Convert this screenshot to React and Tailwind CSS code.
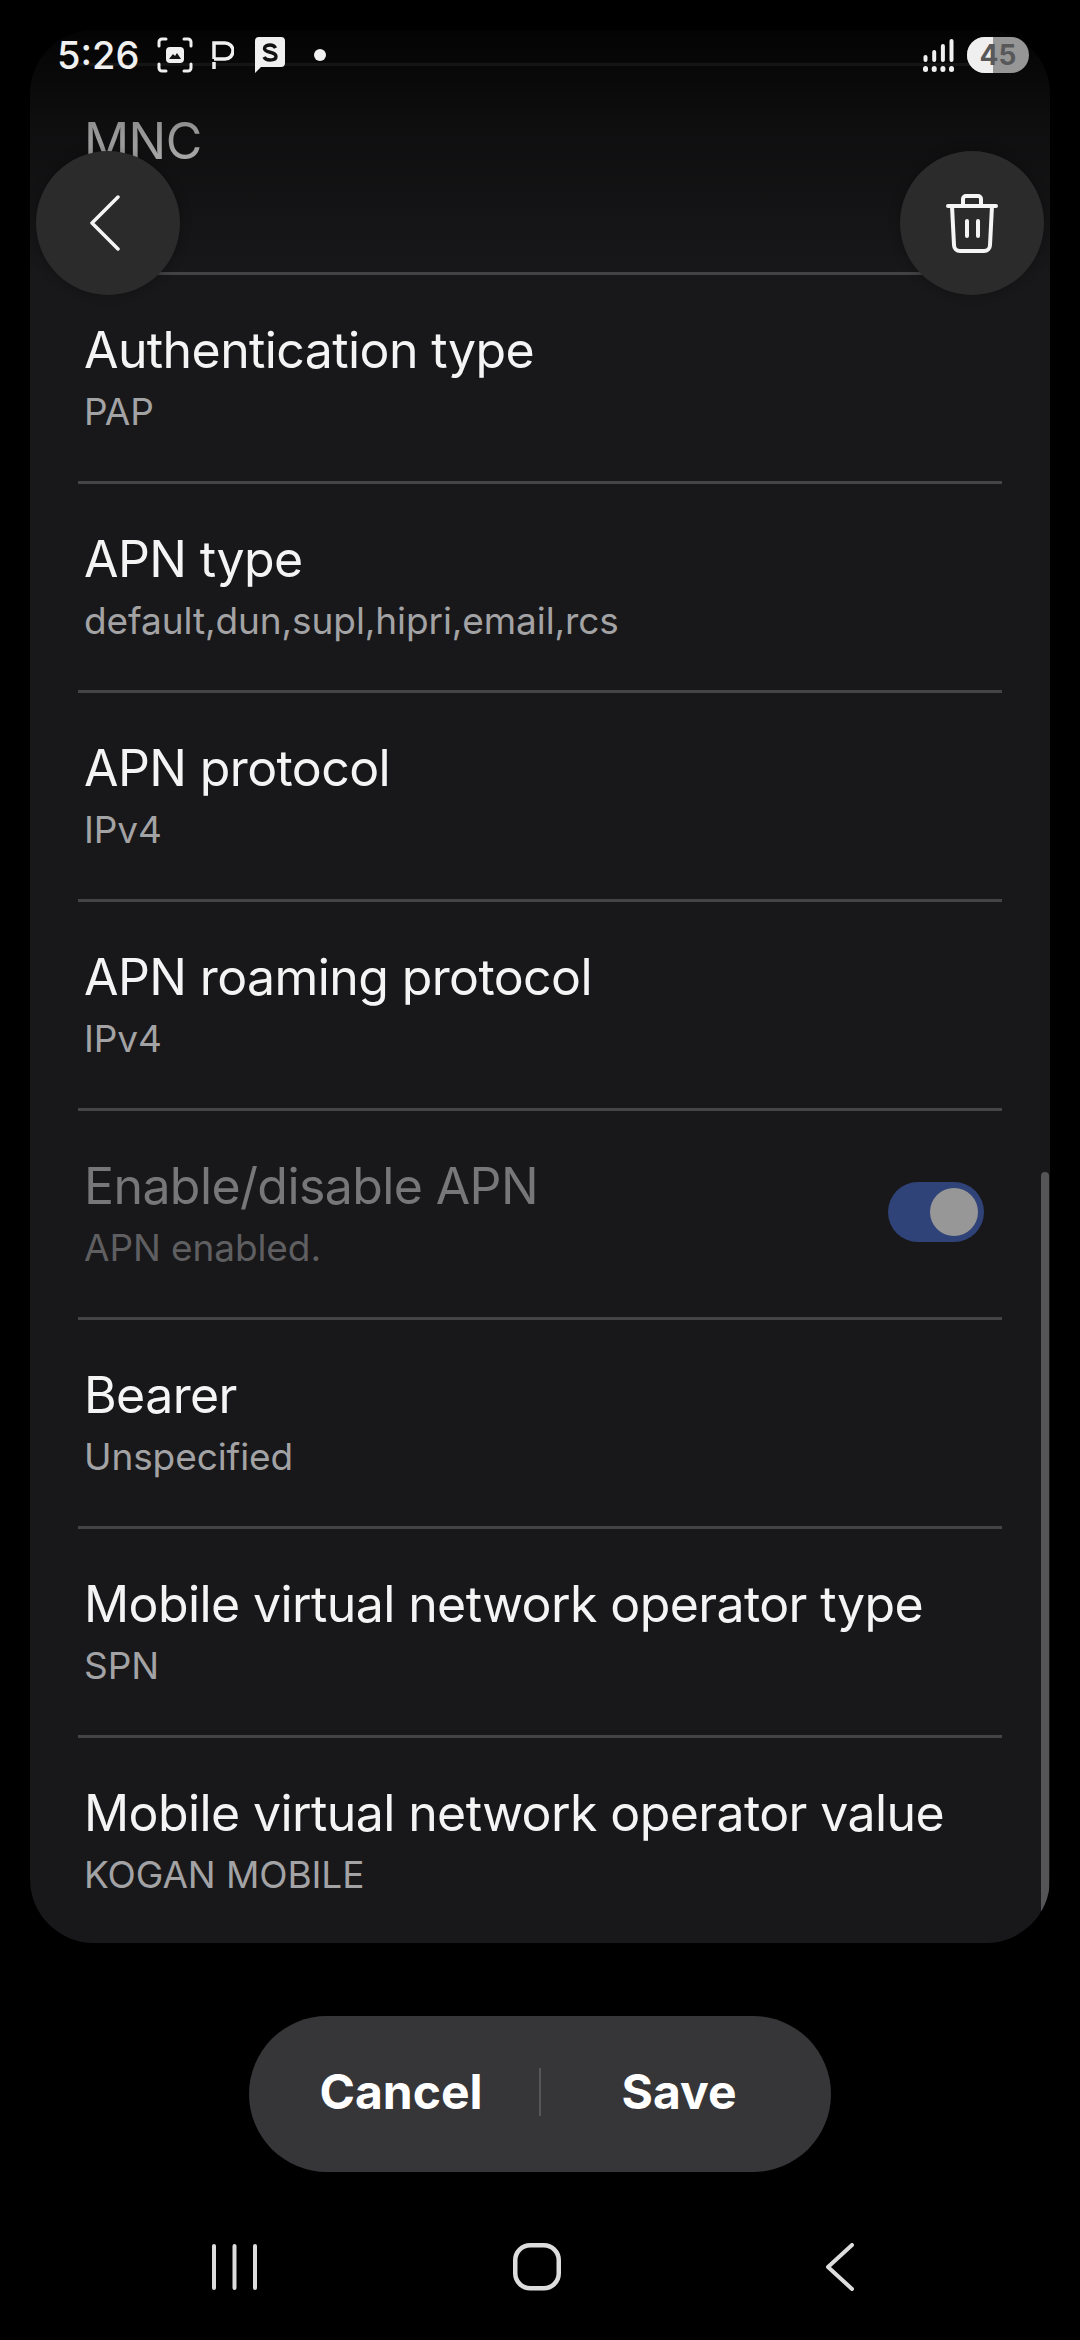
const rows = [
  { title: "Authentication type", value: "PAP" },
  { title: "APN type", value: "default,dun,supl,hipri,email,rcs" },
  { title: "APN protocol", value: "IPv4" },
  { title: "APN roaming protocol", value: "IPv4" },
  { title: "Enable/disable APN", value: "APN enabled.", disabled: true, toggle: true },
  { title: "Bearer", value: "Unspecified" },
  { title: "Mobile virtual network operator type", value: "SPN" },
  { title: "Mobile virtual network operator value", value: "KOGAN MOBILE", last: true },
];

const Row = ({ title, value, disabled, toggle, last }) => (
  <div className={`relative h-[209px] mx-12 px-[6px] pt-[42px] ${last ? "" : "border-b-[3px] border-[#444446]"}`}>
    <div className={`text-[50px] tracking-[-0.6px] leading-[66px] ${disabled ? "text-[#77777a]" : "text-[#f4f4f4]"}`}>{title}</div>
    <div className={`text-[37px] tracking-[-0.1px] leading-[50px] mt-[4px] ${disabled ? "text-[#5f5f61]" : "text-[#a3a3a5]"}`}>{value}</div>
    {toggle && (
      <div className="absolute right-[18px] top-[71px] w-[96px] h-[60px] rounded-full bg-[#2f4379] flex items-center justify-end pr-[6px]">
        <div className="w-[48px] h-[48px] rounded-full bg-[#979797]" />
      </div>
    )}
  </div>
);

const StatusBar = () => (
  <div className="absolute top-0 left-0 right-0 h-[110px] flex items-start justify-between pl-[57px] pr-[51px] pt-[32px] text-[#f0f0f0]">
    <div className="flex items-center h-[46px]">
      <span className="text-[38px] font-medium leading-none w-[100px]">5:26</span>
      <svg width="36" height="36" viewBox="0 0 36 36" fill="none" stroke="#f0f0f0" strokeWidth="3" strokeLinecap="round">
        <path d="M2 9V5a3 3 0 0 1 3-3h4M27 2h4a3 3 0 0 1 3 3v4M2 27v4a3 3 0 0 0 3 3h4M27 34h4a3 3 0 0 0 3-3v-4" />
        <rect x="9" y="10" width="18" height="16" rx="4" fill="#f0f0f0" stroke="none" />
        <path d="M12 22l4-5 2 2 2-3 4 6z" fill="#111" stroke="none" />
      </svg>
      <svg className="ml-[19px]" width="22" height="28" viewBox="0 0 22 28" fill="none" stroke="#f0f0f0" strokeWidth="3.5">
        <path d="M2 18V2h11a8 8 0 0 1 0 16H2M2 21v7" />
      </svg>
      <svg className="ml-[21px]" width="30" height="36" viewBox="0 0 30 36">
        <path d="M4 0h22a4 4 0 0 1 4 4v22a4 4 0 0 1-4 4H6l-6 6V4a4 4 0 0 1 4-4z" fill="#f0f0f0" />
        <path d="M20.5 11c-1-2-3-3-5.500-3s-5.500 1-5.500 3.500c0 5 11.500 2.500 11.500 8 0 2.500-3 3.500-6 3.500s-5-1-6-3" fill="none" stroke="#111" strokeWidth="3.4" />
      </svg>
      <div className="ml-[29px] w-[12px] h-[12px] rounded-full bg-[#f0f0f0]" />
    </div>
    <div className="flex items-center h-[46px]">
      <svg width="31" height="33" viewBox="0 0 31 33" fill="#f0f0f0">
        <rect x="0" y="27" width="5" height="6" rx="2.500" />
        <rect x="8.700" y="27" width="5" height="6" rx="2.500" />
        <rect x="17.400" y="27" width="5" height="6" rx="2.500" />
        <rect x="26" y="27" width="5" height="6" rx="2.500" />
        <rect x="0.500" y="16" width="4" height="7" rx="2" />
        <rect x="9.200" y="11" width="4" height="12" rx="2" />
        <rect x="17.900" y="5" width="4" height="18" rx="2" />
        <rect x="26.500" y="0" width="4" height="23" rx="2" />
      </svg>
      <div className="relative ml-[13px] w-[62px] h-[36px] rounded-full overflow-hidden bg-[#969696]">
        <div className="absolute left-0 top-0 bottom-0 w-[26px] bg-[#efefef]" />
        <div className="absolute inset-0 flex items-center justify-center text-[28px] font-bold leading-none text-[#58585a]">45</div>
      </div>
    </div>
  </div>
);

const RoundButton = ({ children }) => (
  <div className="w-[144px] h-[144px] rounded-full bg-[#2b2b2c] flex items-center justify-center shadow-[0_0_12px_rgba(0,0,0,0.3)]">
    {children}
  </div>
);

export default function App() {
  return (
    <div className="relative w-[1080px] h-[2340px] bg-black overflow-hidden flex flex-col items-center font-['Inter',sans-serif]">
      {/* scrolled list panel */}
      <div className="relative w-[1020px] h-[1913px] mt-[30px] shrink-0 rounded-[64px] bg-[#18181a] overflow-hidden">
        <div className="h-[36px] mx-12 border-b-[3px] border-[#444446]" />
        <div className="relative h-[209px] mx-12 px-[6px] pt-[42px] border-b-[3px] border-[#444446]">
          <div className="text-[50px] tracking-[-0.6px] leading-[66px] text-[#f4f4f4]">MNC</div>
        </div>
        {rows.map((r) => (
          <Row key={r.title} {...r} />
        ))}
        <div className="absolute right-[1px] top-[1142px] w-[8px] h-[754px] rounded-full bg-[#555557]" />
      </div>

      {/* top fade */}
      <div className="absolute top-0 left-0 right-0 h-[280px] bg-gradient-to-b from-black via-black/40 via-45% to-transparent" />

      <StatusBar />

      <div className="absolute top-[151px] left-[36px] right-[36px] flex justify-between">
        <RoundButton>
          <svg className="-ml-[6px]" width="32" height="56" viewBox="0 0 32 56" fill="none" stroke="#f5f5f5" strokeWidth="3.5" strokeLinecap="round" strokeLinejoin="round">
            <path d="M29 2L3 28l26 26" />
          </svg>
        </RoundButton>
        <RoundButton>
          <svg width="52" height="60" viewBox="0 0 52 60" fill="none" stroke="#f5f5f5" strokeWidth="4" strokeLinecap="round" strokeLinejoin="round">
            <path d="M2 13h48M17 13V6a3 3 0 0 1 3-3h12a3 3 0 0 1 3 3v7M6 13l2 39a6 6 0 0 0 6 6h24a6 6 0 0 0 6-6l2-39M21 28v15M32 28v15" />
          </svg>
        </RoundButton>
      </div>

      {/* cancel / save pill */}
      <div className="mt-[73px] w-[582px] h-[156px] shrink-0 rounded-full bg-[#363638] flex items-center text-white text-[48px] font-bold">
        <div className="flex-1 flex justify-center pl-[14px] pb-[4px]">Cancel</div>
        <div className="w-[2px] h-[48px] bg-[#565658] -mt-[4px]" />
        <div className="flex-1 flex justify-center pr-[14px] pb-[4px]">Save</div>
      </div>

      {/* navigation bar */}
      <div className="mt-[71px] w-full flex items-start pl-[210px]">
        <svg width="48" height="48" viewBox="0 0 48 48" stroke="#dddddd" strokeWidth="4" strokeLinecap="round">
          <path d="M4 3v42M24.500 3v42M45 3v42" />
        </svg>
        <svg className="ml-[255px]" width="48" height="48" viewBox="0 0 48 48" fill="none" stroke="#dddddd" strokeWidth="4.500">
          <rect x="2.250" y="2.250" width="43.500" height="43" rx="15" />
        </svg>
        <svg className="ml-[263px]" width="32" height="48" viewBox="0 0 32 48" fill="none" stroke="#dddddd" strokeWidth="4" strokeLinecap="round" strokeLinejoin="round">
          <path d="M28 2L4 24l24 22" />
        </svg>
      </div>
    </div>
  );
}
